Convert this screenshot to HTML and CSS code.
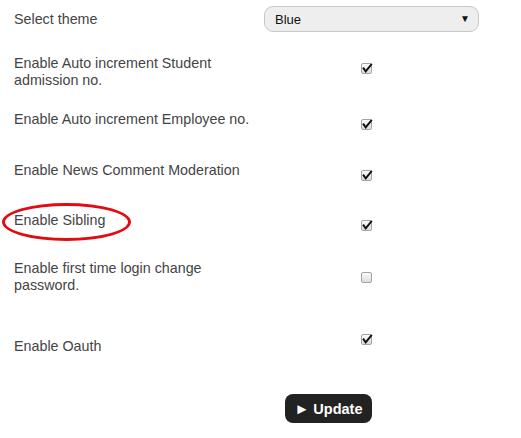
FILE: index.html
```html
<!DOCTYPE html>
<html>
<head>
<meta charset="utf-8">
<link rel="stylesheet" href="styles.css">
</head>
<body>
<div class="settings">
  <div class="row r1">
    <div class="label single">Select theme</div>
    <div class="control">
      <div class="select-wrap">
        <select class="theme"><option>Blue</option></select>
        <span class="arrow">▼</span>
      </div>
    </div>
  </div>
  <div class="row r2">
    <div class="label">Enable Auto increment Student admission no.</div>
    <div class="control center"><span class="cb"><svg viewBox="0 0 12 12" width="12" height="12"><path d="M2.6 6.4 L4.7 9.4 L10.2 2.6" /></svg></span></div>
  </div>
  <div class="row r3">
    <div class="label">Enable Auto increment Employee no.</div>
    <div class="control center"><span class="cb"><svg viewBox="0 0 12 12" width="12" height="12"><path d="M2.6 6.4 L4.7 9.4 L10.2 2.6" /></svg></span></div>
  </div>
  <div class="row r4">
    <div class="label">Enable News Comment Moderation</div>
    <div class="control center"><span class="cb"><svg viewBox="0 0 12 12" width="12" height="12"><path d="M2.6 6.4 L4.7 9.4 L10.2 2.6" /></svg></span></div>
  </div>
  <div class="row r5">
    <div class="label circled">Enable Sibling<span class="ring"></span></div>
    <div class="control center"><span class="cb"><svg viewBox="0 0 12 12" width="12" height="12"><path d="M2.6 6.4 L4.7 9.4 L10.2 2.6" /></svg></span></div>
  </div>
  <div class="row r6">
    <div class="label">Enable first time login change password.</div>
    <div class="control center"><span class="cb"></span></div>
  </div>
  <div class="row r7">
    <div class="label"><br>Enable Oauth</div>
    <div class="control center"><span class="cb"><svg viewBox="0 0 12 12" width="12" height="12"><path d="M2.6 6.4 L4.7 9.4 L10.2 2.6" /></svg></span></div>
  </div>
  <div class="actions">
    <button class="update"><span class="tri">►</span> Update</button>
  </div>
</div>
</body>
</html>
```
FILE: styles.css
```css
html, body {
  margin: 0;
  padding: 0;
  background: #fff;
}
body {
  font-family: "Liberation Sans", Arial, sans-serif;
  font-size: 14.3px;
  color: #444;
}
.settings {
  padding: 6px 0 0 14px;
  display: flex;
  flex-direction: column;
}
.row {
  display: grid;
  grid-template-columns: 250px 215px;
  min-height: 26px;
}
.r2 { margin-top: 23px; }
.r3 { margin-top: 22px; }
.r4 { margin-top: 25px; }
.r5 { margin-top: 24px; }
.r6 { margin-top: 22px; }
.r7 { margin-top: 27px; }
.label {
  line-height: 17px;
  width: 240px;
  position: relative;
}
.label.single {
  line-height: 26px;
}
.control {
  display: flex;
  align-items: flex-start;
}
.control.center {
  align-items: center;
  justify-content: center;
  padding-right: 10px;
}
.r2 .control.center { align-items: flex-start; padding-top: 8px; }
.r7 .control.center { align-items: flex-start; padding-top: 13px; }
.select-wrap {
  position: relative;
  width: 215px;
  height: 26px;
}
.theme {
  -webkit-appearance: none;
  appearance: none;
  width: 215px;
  height: 26px;
  box-sizing: border-box;
  border: 1px solid #c8c8c8;
  border-radius: 9px;
  background: #eeeeee;
  font-family: "Liberation Sans", Arial, sans-serif;
  font-size: 13px;
  color: #111;
  padding: 0 0 0 10px;
  margin: 0;
}
.arrow {
  position: absolute;
  right: 9px;
  top: 8px;
  font-size: 10px;
  line-height: 10px;
  color: #111;
  pointer-events: none;
}
.cb {
  display: block;
  width: 11px;
  height: 11px;
  box-sizing: border-box;
  border: 1px solid #a4a4a4;
  border-radius: 2px;
  background: linear-gradient(#fbfbfb, #dcdcdc);
  position: relative;
}
.cb svg {
  position: absolute;
  left: -1px;
  top: -2px;
  overflow: visible;
}
.cb path {
  fill: none;
  stroke: #111;
  stroke-width: 1.9;
  stroke-linecap: square;
  stroke-linejoin: miter;
}
.ring {
  position: absolute;
  left: -12px;
  top: -9px;
  width: 123px;
  height: 32px;
  border: 3px solid #e30b12;
  border-radius: 50%;
  pointer-events: none;
}
.actions {
  margin-top: 39px;
  padding-left: 271px;
}
.update {
  background: #222;
  color: #fff;
  border: none;
  border-radius: 8px;
  height: 29px;
  width: 87px;
  font-family: "Liberation Sans", Arial, sans-serif;
  font-size: 14.5px;
  font-weight: bold;
  padding: 0;
  cursor: pointer;
}
.tri {
  font-size: 15px;
}
```
